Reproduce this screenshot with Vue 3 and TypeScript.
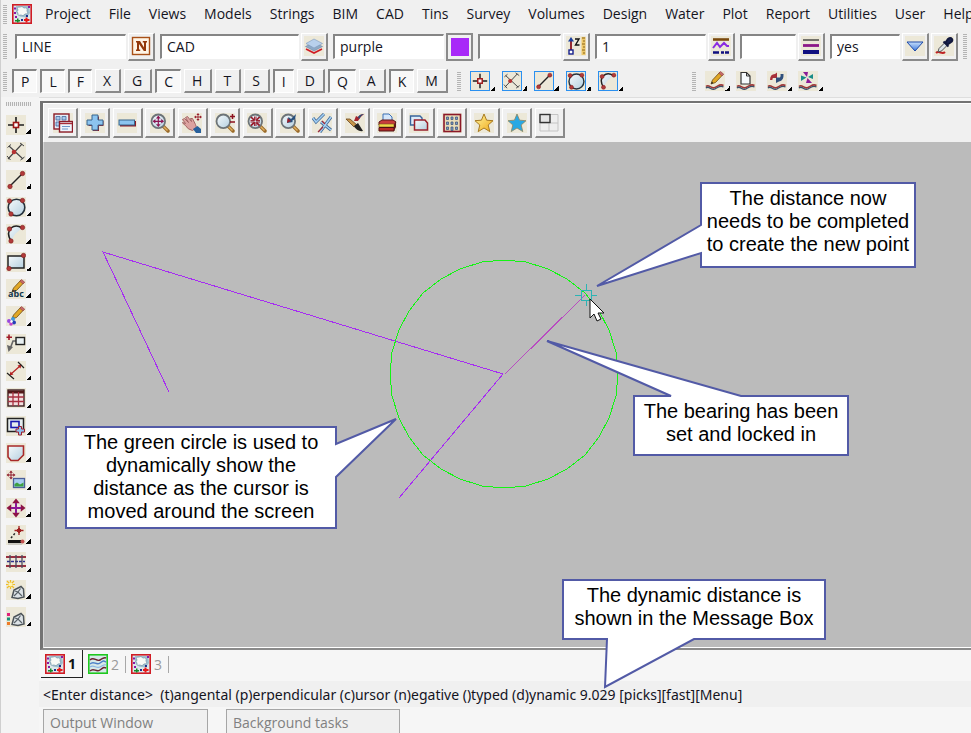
<script setup lang="ts">
interface Field {
  label: string
  value: string
  size: string
  icon: string
  action: string
}
interface Toggle {
  key: string
  on: boolean
}
interface Tool {
  icon: string
  label: string
  more: boolean
}
interface Callout {
  id: string
  lines: string[]
  outline: string
}
interface ViewTab {
  n: number
  icon: string
  active: boolean
}

const menus: string[] = [
  'Project', 'File', 'Views', 'Models', 'Strings', 'BIM', 'CAD', 'Tins', 'Survey',
  'Volumes', 'Design', 'Water', 'Plot', 'Report', 'Utilities', 'User', 'Help',
]

const fields: Field[] = [
  { label: 'Name', value: 'LINE', size: 'l', icon: 'name', action: 'Pick name' },
  { label: 'Model', value: 'CAD', size: 'xl', icon: 'layers', action: 'Pick model' },
  { label: 'Colour', value: 'purple', size: 'l', icon: 'swatch', action: 'Pick colour' },
  { label: 'Height', value: '', size: 'm', icon: 'height', action: 'Pick height' },
  { label: 'Line style', value: '1', size: 'l', icon: 'linestyle', action: 'Pick line style' },
  { label: 'Weight', value: '', size: 's', icon: 'weight', action: 'Pick weight' },
  { label: 'Tinable', value: 'yes', size: 'sm', icon: 'down', action: 'Choose tinable' },
]

const pressed = 'PLFCIQK'
const toggles: Toggle[] = 'PLFXGCHTSIDQAKM'.split('').map((key) => ({ key, on: pressed.includes(key) }))

const snapTools: Tool[] = [
  { icon: 'point', label: 'Point', more: true },
  { icon: 'cross', label: 'Intersection', more: true },
  { icon: 'line', label: 'Line', more: true },
  { icon: 'circle', label: 'Circle', more: true },
  { icon: 'arc', label: 'Arc', more: true },
]
const editTools: Tool[] = [
  { icon: 'edit', label: 'Edit string', more: true },
  { icon: 'page', label: 'New string', more: false },
  { icon: 'cycle', label: 'Change string', more: true },
  { icon: 'spin', label: 'Transform string', more: true },
]

const dockTools: Tool[] = [
  { icon: 'point', label: 'Create point', more: true },
  { icon: 'cross', label: 'Create intersection', more: true },
  { icon: 'line', label: 'Create line', more: true },
  { icon: 'circle', label: 'Create circle', more: true },
  { icon: 'arc', label: 'Create arc', more: true },
  { icon: 'rect', label: 'Create rectangle', more: true },
  { icon: 'text', label: 'Create text', more: true },
  { icon: 'symbol', label: 'Create symbol', more: true },
  { icon: 'leader', label: 'Create leader', more: true },
  { icon: 'dimension', label: 'Create dimension', more: true },
  { icon: 'table', label: 'Create table', more: true },
  { icon: 'frame', label: 'Create frame', more: true },
  { icon: 'polygon', label: 'Create polygon', more: true },
  { icon: 'image', label: 'Insert image', more: true },
  { icon: 'move', label: 'Move', more: true },
  { icon: 'measure', label: 'Measure', more: true },
  { icon: 'track', label: 'Parallel', more: true },
  { icon: 'newshape', label: 'New shape', more: true },
  { icon: 'shapes', label: 'Shape list', more: true },
]

const viewTools: Tool[] = [
  { icon: 'windows', label: 'View menu', more: false },
  { icon: 'plus', label: 'Add model', more: false },
  { icon: 'minus', label: 'Remove model', more: false },
  { icon: 'fit', label: 'Fit', more: false },
  { icon: 'pan', label: 'Pan', more: false },
  { icon: 'zoom', label: 'Zoom', more: false },
  { icon: 'shrink', label: 'Shrink', more: false },
  { icon: 'previous', label: 'Previous view', more: false },
  { icon: 'redraw', label: 'Toggle', more: false },
  { icon: 'brush', label: 'Redraw', more: false },
  { icon: 'print', label: 'Plot', more: false },
  { icon: 'copy', label: 'Copy view', more: false },
  { icon: 'building', label: 'Faces', more: false },
  { icon: 'star', label: 'Favourites', more: false },
  { icon: 'bluestar', label: 'Shared favourites', more: false },
  { icon: 'layout', label: 'Layout', more: false },
]

const callouts: Callout[] = [
  {
    id: 'distance',
    lines: ['The distance now', 'needs to be completed', 'to create the new point'],
    outline: 'M1 1H215V85H1V71L-103 104L1 43Z',
  },
  {
    id: 'bearing',
    lines: ['The bearing has been', 'set and locked in'],
    outline: 'M1 1H38L-86 -54L108 1H215V60H1Z',
  },
  {
    id: 'circle',
    lines: ['The green circle is used to', 'dynamically show the', 'distance as the cursor is', 'moved around the screen'],
    outline: 'M1 1H271V18L331 -7L271 51V102H1Z',
  },
  {
    id: 'message',
    lines: ['The dynamic distance is', 'shown in the Message Box'],
    outline: 'M1 1H263V60H132L43 108L45 60H1Z',
  },
]

const tabs: ViewTab[] = [
  { n: 1, icon: 'plan', active: true },
  { n: 2, icon: 'section', active: false },
  { n: 3, icon: 'plan', active: false },
]

// The view draws circles as chords, so the outline is a regular polygon.
const ring: string = Array.from({ length: 32 }, (_, i) => {
  const a = (i * Math.PI) / 16
  return `${Math.round(460 + 114 * Math.cos(a))},${Math.round(232 + 114 * Math.sin(a))}`
}).join(' ')

const sand = '<rect width="20" height="20" fill="#ece8d8"/>'
const dot = (x: number, y: number) =>
  `<circle cx="${x}" cy="${y}" r="2.2" fill="#b23a3a" stroke="#7c1c1c" stroke-width=".6"/>`
const arrows4 = (x: number, y: number, s: number, c: string) =>
  `<g transform="translate(${x} ${y}) scale(${s})" fill="${c}"><path d="M-1-6H1V6H-1ZM-6-1H6V1H-6Z"/><path d="M0-10L4-5H-4ZM0 10L4 5H-4ZM-10 0L-5-4V4ZM10 0L5-4V4Z"/></g>`
const lens =
  '<path d="M13 13L18 18" stroke="#9a6a2a" stroke-width="3.4" stroke-linecap="round"/><path d="M13 13L17.5 17.5" stroke="#e0b060" stroke-width="1.4"/><circle cx="8.3" cy="8.3" r="6.8" fill="url(#glass)" stroke="#6d7478" stroke-width="1.8"/>'
const pencil =
  '<path d="M6 13L7.500 9L15 1L18 3.500L10.500 11.500Z" fill="#e2a826" stroke="#6b4a10" stroke-width=".8"/><path d="M13.800 2.300L15.500 .5L18.800 3.200L17 5Z" fill="#c46a6a" stroke="#8a3a3a" stroke-width=".5"/><path d="M6 13L6.800 10.600L8.400 12.100Z" fill="#222"/>'
const wave =
  '<path d="M1 15.500C4 12.500 6 18.500 10 16.500S15 12.500 18.500 14.500" fill="none" stroke="#a03838" stroke-width="1.6"/><path d="M1 17C4 14 6 20 10 18S15 14 18.500 16" fill="none" stroke="#3a5068" stroke-width="1.3"/>'
const gem =
  '<path d="M6 17.500L8 10L15 6.500L17.500 9L18 17L12 18.500Z" fill="#dde3e7" stroke="#4c5358" stroke-width="1.5"/><path d="M8 16L12 12L16 16M12 12L14.500 8.500M12 12L9 11" fill="none" stroke="#596268" stroke-width="1.2"/>'
const starPath = 'M10 1L12.600 7.200L19 7.700L14.200 12L15.800 18.600L10 15L4.200 18.600L5.800 12L1 7.700L7.400 7.200Z'
const planIcon =
  '<rect x=".8" y=".8" width="18.400" height="18.400" fill="#dbe7ea" stroke="#d01c24" stroke-width="1.600"/><path d="M4 2H17L18 9Q15 14 11 13Q6 13 4 8Z" fill="#9fc0cf"/><path d="M6 6Q4 3 8 3Q10 1.500 12 4Q16 3 15 7Q17 10 13 10Q11 13 9 11Q5 12 6 9Q4 8 6 6Z" fill="#f8faf6" stroke="#7c9cb0" stroke-width=".8"/><path d="M2 3.500H4V5.500H2ZM2 8H4V10H2ZM3 12H5V14H3ZM16 2H18V4H16Z" fill="#8a1aa4"/><path d="M14 11H16V13H14ZM9 15H11V17H9Z" fill="#1c2f8c"/><path d="M3 16H5V14.500H6.500V16H8V17.500H6.500V18.500H5V17.500H3Z" fill="#148a2c"/><path d="M13.500 13.500H15.500V15H17.500V17H15.500V18.500H13.500V17H12V15H13.500Z" fill="#e81818"/>'

const icons: Record<string, string> = {
  plan: planIcon,
  section:
    '<rect x=".8" y=".8" width="18.400" height="18.400" fill="#d7e9e8" stroke="#1ec81e" stroke-width="1.600"/><path d="M2 6C6 2 8 8 12 6S16 3 18 4M2 17C6 13 8 19 12 16S16 13 18 14" fill="none" stroke="#6b2330" stroke-width="1.4"/><path d="M2 10C6 6 8 12 12 9S16 7 18 8" fill="none" stroke="#4c80c8" stroke-width="1.4"/><path d="M2 13C6 10 8 15 12 13S16 10 18 11" fill="none" stroke="#8cb8e4" stroke-width="1.2"/>',
  name: '<rect x="1.500" y="1.500" width="17" height="17" fill="#fff5e6" stroke="#a85018" stroke-width="1.400"/><path d="M5 5H9L13 11.500V6.500H11.800V5H16V6.500H15V15H12.800L8 8V13.500H9.200V15H5V13.500H6V6.500H5Z" fill="#93380a"/>',
  layers:
    sand + '<path d="M2 13L10 17L18 13" fill="none" stroke="#d01c24" stroke-width="1.800"/><path d="M1.500 10.500L10 6.500L18.500 10.500L10 15Z" fill="#8ea9c6" stroke="#6d88a8" stroke-width=".6"/><path d="M2 7.500L10 3L18.500 7.500L10 12Z" fill="#b8d0ec" stroke="#7c98bc" stroke-width=".6"/>',
  swatch: '<rect x="1" y="1" width="18" height="18" fill="#a828f8"/>',
  height:
    sand + '<path d="M5 4V14" stroke="#8c1420" stroke-width="1.800"/><path d="M5 1L8 5.500H2Z" fill="#1b3f9c"/><rect x="3" y="14" width="4" height="4" fill="#fff" stroke="#16208c" stroke-width="1.400"/><path d="M9 3H13L9.500 9H13.500" fill="none" stroke="#111" stroke-width="1.400"/><rect x="15.500" y="1" width="4" height="18" fill="#edc86a"/><path d="M16 2H19M17 5H19M16 8H19M17 11H19M16 14H19M17 17H19" stroke="#8a6418" stroke-width="1"/>',
  linestyle:
    sand + '<path d="M2 3.500H18" stroke="#7a4a10" stroke-width="2.600"/><path d="M2 12L6 7L9 11L13 7L16 10L18 10" fill="none" stroke="#8a2be2" stroke-width="2"/><path d="M2 16.500H18" stroke="#101080" stroke-width="2.600" stroke-dasharray="6 2 3 1"/>',
  weight:
    sand + '<path d="M2 4H18" stroke="#222" stroke-width="1.200"/><path d="M2 9.500H18" stroke="#8c1888" stroke-width="2.800"/><path d="M2 16H18" stroke="#101080" stroke-width="4"/>',
  down: sand + '<path d="M2 6H18L10 15Z" fill="url(#sky)" stroke="#1d49a8" stroke-width="1"/>',
  dropper:
    sand + '<path d="M2 17C5 14 8 19 11 16" fill="none" stroke="#c02424" stroke-width="2"/><path d="M4 16L5 12.500L11 6.500L13.500 9L7.500 15Z" fill="#dfe6ea" stroke="#555" stroke-width="1"/><path d="M9.500 5.500L14.500 10.500M11.500 6.500L14 3Q16.500 1 18 3Q19 5 16.500 6.500L13.500 8.500Z" fill="#1a2350" stroke="#12183c" stroke-width="2"/>',
  point:
    sand + '<path d="M10 2V7M10 13V18M2 10H7M13 10H18" stroke="#1c1c1c" stroke-width="1.600"/><rect x="7.500" y="7.500" width="5" height="5" fill="#fff" stroke="#a01818" stroke-width="1.600"/>',
  cross:
    sand + '<path d="M3 4L17 17M16 2L2 17" stroke="#444" stroke-width="1.100"/><path d="M1.500 5.500L5 2.500M14 1L18 4M1 14L4.500 18M14.500 18L18.500 15" stroke="#444" stroke-width="1"/><circle cx="8" cy="10" r="2.300" fill="#b43232"/>',
  line: sand + '<path d="M4 16L16 4" stroke="#222" stroke-width="1.500"/>' + dot(16.500, 3.500) + dot(4, 16.500),
  circle:
    sand + '<circle cx="10.500" cy="10.500" r="8.300" fill="url(#glass)" stroke="#26323c" stroke-width="1.600"/>' + dot(3.500, 4) + dot(16.500, 3.500) + dot(5, 17),
  arc:
    sand + '<path d="M5 17Q0 9 5 4Q10 0 16 4L9 10Z" fill="url(#glass)"/><path d="M5 17Q0 9 5 4Q10 0 16 4" fill="none" stroke="#222" stroke-width="1.600"/>' + dot(3.500, 5) + dot(16.500, 3.500) + dot(5, 17),
  rect: sand + '<rect x="2" y="4" width="16" height="12" fill="url(#glass)" stroke="#222" stroke-width="1.500"/>' + dot(17.500, 3.500) + dot(3, 16.500),
  text: sand + pencil + '<text x="10" y="18" text-anchor="middle" font-family="Open Sans, sans-serif" font-size="9" font-weight="700" fill="#12384c">abc</text>',
  symbol:
    sand + pencil + '<circle cx="3" cy="15" r="2" fill="#9a4ae0"/><circle cx="7" cy="13" r="2" fill="#3f9ae0"/><circle cx="8" cy="16.500" r="2" fill="#2440b8"/><circle cx="5" cy="18" r="1.800" fill="#c044c8"/><circle cx="5.500" cy="15.500" r="1.200" fill="#fff"/>',
  leader:
    sand + '<path d="M3 .5V6M.5 3.200H6" stroke="#a01828" stroke-width="1.600"/><path d="M10 7H7L4 15" fill="none" stroke="#666" stroke-width="1.600"/><path d="M1 11L7 13L2.500 18Z" fill="#666"/><rect x="10" y="3.500" width="8.500" height="7" fill="#e8f0f2" stroke="#222" stroke-width="1.400"/>',
  dimension:
    sand + '<path d="M5 13L14 5" stroke="#b42020" stroke-width="1.200"/><path d="M3.500 14.500L4.500 10.500L7.500 13.500ZM15.500 3.500L14.500 7.500L11.500 4.500Z" fill="#b42020"/><path d="M1 12L8 18M12 1L18 7" stroke="#222" stroke-width="1.200"/>',
  table:
    sand + '<rect x="2" y="2" width="16" height="16" fill="#f2dede" stroke="#3a2020" stroke-width="1.400"/><path d="M2 4H18" stroke="#521818" stroke-width="3"/><path d="M7 4V18M12.500 4V18M2 9H18M2 13.500H18" stroke="#a83040" stroke-width="1.300"/>',
  frame:
    sand + '<rect x="1.500" y="2.500" width="16" height="13" fill="#e4ecee" stroke="#222" stroke-width="1.500"/><rect x="5" y="5.500" width="8" height="6" fill="none" stroke="#1818b0" stroke-width="1.600"/><path d="M12.500 10.500H15.500V13H18.500V16H15.500V19H12.500V16H10V13H12.500Z" fill="#8ec0ec" stroke="#a02030" stroke-width="1"/>',
  polygon: sand + '<path d="M2 3H17.500V12L12 17.500H5L2 14Z" fill="url(#glass)" stroke="#a82828" stroke-width="1.600"/>',
  image:
    sand + arrows4(5, 5, 0.45, '#8c1828') + '<rect x="7.500" y="8.500" width="11" height="9" fill="#a8ccf0" stroke="#4c5e98" stroke-width="1.300"/><path d="M8.500 16.500V14L11 12.500L14 14.500L17.500 12.500V16.500Z" fill="#3da040"/>',
  move: sand + arrows4(10, 10, 0.95, '#8c1444') + '<path d="M10 5V15M5 10H15" stroke="#8c1898" stroke-width="2"/>',
  measure:
    sand + '<path d="M5 13L10 7" stroke="#222" stroke-width="1.500" stroke-dasharray="2 2"/><path d="M13 1V10M8.500 5.500H17.500" stroke="#a02020" stroke-width="1.300"/><path d="M13 3L15.500 5.500L13 8L10.500 5.500Z" fill="#a02020" stroke="#a02020"/><path d="M2 16.500H15" stroke="#111" stroke-width="3"/><circle cx="16.500" cy="16.500" r="2" fill="#c05050"/><path d="M2 19H16" stroke="#aaa" stroke-width="1"/>',
  track:
    sand + '<path d="M0 5H20M0 14H20" stroke="#983040" stroke-width="1.800"/><path d="M1 9.500H19" stroke="#303090" stroke-width="1.500" stroke-dasharray="3 1"/><path d="M4 3V16M10 3V16M16 3V16" stroke="#4c4c60" stroke-width="1.300"/>',
  newshape:
    sand + gem + '<path d="M4.500 0V9M0 4.500H9M1 1L8 8M8 1L1 8" stroke="#efbe28" stroke-width="1.200"/><circle cx="4.500" cy="4.500" r="2" fill="#fff3b0"/>',
  shapes: sand + gem + '<path d="M1 6H4V9H1Z" fill="#e0207c"/><path d="M1 10.500H4V13.500H1Z" fill="#189078"/><path d="M1 15H4V18H1Z" fill="#ee7a28"/>',
  edit: sand + wave + pencil,
  page: sand + '<path d="M5 1.500H10.500L14 5V13H5Z" fill="#f6fafc" stroke="#333" stroke-width="1.200"/><path d="M10.500 1.500V5H14" fill="none" stroke="#333"/>' + wave,
  cycle:
    sand + '<path d="M3 9Q3 3 8 3L10 1.500V7H6Q5 8 5.500 9Z" fill="#a83038"/><path d="M16.500 3Q17 10 12 10.500L9 12V6.500H13Q14 5 13.500 3Z" fill="#30507c"/>' + wave,
  spin:
    sand + '<path d="M9 6L5 1H10Z" fill="#8c1c98"/><path d="M10 6L15 3V8Z" fill="#188c88"/><path d="M9.500 7L14 12H8Z" fill="#8c1c98"/><path d="M8.500 6.500L3 10V4.500Z" fill="#188c88"/>' + wave,
  windows:
    sand + '<rect x="1" y="1" width="15" height="15" fill="#e4edf8" stroke="#8c1c28" stroke-width="1.400"/><path d="M3 3.500H7V7H3ZM9 3.500H13V7H9ZM3 9H7V13H3Z" fill="#a8c8ec" stroke="#44689c" stroke-width=".8"/><rect x="6.500" y="8.500" width="13" height="10.500" fill="#eef5fc" stroke="#8c1c28" stroke-width="1.400"/><path d="M7 10.500H19" stroke="#a82c38" stroke-width="1.400"/><path d="M9 13.500H17M9 16H15" stroke="#6f98cc" stroke-width="1.200"/>',
  plus: sand + '<path d="M8 3.500H14V8H18.500V13H14V18H8V13H3.500V8H8Z" fill="#8c1c28"/><path d="M7 2H13V7H18V12H13V17H7V12H2V7H7Z" fill="#8cc4f0" stroke="#38648c" stroke-width="1"/>',
  minus: sand + '<rect x="3" y="8" width="16" height="5.500" fill="#8c1c28"/><rect x="2" y="7" width="15.500" height="5" fill="#8cc4f0" stroke="#38648c"/>',
  fit: sand + lens + arrows4(8.3, 8.3, 0.58, '#8c1450'),
  pan:
    sand + '<path d="M1 4L3 3L7 7L4 2L6 1L10 6L9 3L11 3L14 9L15 12L11 15Q6 14 4 10Q1 8 1 7L4 8Z" fill="#dca2a0" stroke="#9c5c5c" stroke-width=".9" transform="translate(-.5 2.500)"/><path d="M11 16L15.500 13L19 16V20H14Z" fill="#28609c"/>' + arrows4(16, 4, 0.4, '#981c2c'),
  zoom: sand + lens + '<path d="M15 3.500H20M17.500 1V6M15 9H20" stroke="#8c1020" stroke-width="1.500"/>',
  shrink: sand + lens + '<path d="M4 4L7 7M12.600 4L9.600 7M4 12.600L7 9.600M12.600 12.600L9.600 9.600" stroke="#981828" stroke-width="1.700"/><path d="M7.600 3.500V7.600H3.500M9 3.500V7.600H13M7.600 13V9H3.500M9 13V9H13" fill="none" stroke="#981828" stroke-width="1"/>',
  previous: sand + lens + '<path d="M7 10L8.500 4L11 6Q13 4 16 1L15 6Q13 7 12 8L13 9Z" fill="#28507c"/><path d="M7 10L7.500 5L11 8Z" fill="#98202c"/>',
  redraw:
    sand + '<path d="M1 5L4 9L12 1M9 9L19 17M8 19L19 4" fill="none" stroke="#3c6494" stroke-width="3"/><path d="M1 5L4 9L12 1M9 9L19 17M8 19L19 4" fill="none" stroke="#a4d0f4" stroke-width="1.600"/><path d="M6 19L11 14M10 8L13 11" stroke="#a02838" stroke-width="1.200"/>',
  brush:
    sand + '<path d="M1 6L5 6L12 12L9 14Z" fill="#c8964c" stroke="#6a4820" stroke-width=".8"/><path d="M9 13L13 10L18 18Q12 19 9 13Z" fill="#222"/><path d="M9 8L11 3L13 4Q15 1 19 1Q15 4 13 8Z" fill="#a4242e"/><path d="M13 4Q15 1 19 1Q16 2 14 6Z" fill="#28507c"/>',
  print:
    sand + '<path d="M6 8V1H12L15 4V8Z" fill="#d4e6fa" stroke="#3c70b8" stroke-width="1"/><path d="M2 9L5 7H16L19 9L17 12H2Z" fill="#c83c3c" stroke="#5c1818"/><path d="M2 11H17V14H2Z" fill="#f0d848" stroke="#74501c" stroke-width=".6"/><path d="M2 14.500H17V18H2Z" fill="#b82828" stroke="#4c1010"/><path d="M17 12L19 9V14L17 18Z" fill="#5c1818"/>',
  copy:
    sand + '<path d="M1.500 3H11L13 5V12H1.500Z" fill="#dcebfa" stroke="#38649c" stroke-width="1.400"/><path d="M5.500 7H16L18.500 10V17H5.500Z" fill="url(#glass)" stroke="#98202c" stroke-width="1.500"/>',
  building:
    sand + '<rect x="2" y="1.500" width="16.500" height="17" fill="#e8dcb8" stroke="#8c1828" stroke-width="1.600"/><path d="M4.500 4H6.500V6.500H4.500ZM9 4H11V6.500H9ZM13.500 4H15.500V6.500H13.500ZM4.500 9H6.500V11.500H4.500ZM9 9H11V11.500H9ZM13.500 9H15.500V11.500H13.500ZM4.500 14H6.500V16.500H4.500ZM9 14H11V17.500H9ZM13.500 14H15.500V16.500H13.500Z" fill="#7c9cc4" stroke="#44587c" stroke-width=".8"/>',
  star: sand + `<path d="${starPath}" fill="url(#gold)" stroke="#a87a20" stroke-width="1"/>`,
  bluestar: sand + `<path d="${starPath}" fill="#28a8e4" stroke="#8c8460" stroke-width=".8"/>`,
  layout: '<path d="M1 1.500H19V18H1ZM10 1.500V18M1 10H19" fill="#eee" stroke="#c4c4c4" stroke-width="1"/><rect x="1" y="1.500" width="10" height="8" fill="#e4e4e4" stroke="#333" stroke-width="1.400"/>',
}
</script>

<template>
  <div class="app">
    <svg class="defs" aria-hidden="true">
      <defs>
        <linearGradient id="glass" x1="0" y1="0" x2="1" y2="1">
          <stop offset="0" stop-color="#f6fafc" />
          <stop offset="1" stop-color="#b4cfdf" />
        </linearGradient>
        <linearGradient id="sky" x1="0" y1="0" x2="0" y2="1">
          <stop offset="0" stop-color="#c8e0fc" />
          <stop offset="1" stop-color="#3c78dc" />
        </linearGradient>
        <linearGradient id="gold" x1="0" y1="0" x2="1" y2="1">
          <stop offset="0" stop-color="#fff6a0" />
          <stop offset="1" stop-color="#f0a818" />
        </linearGradient>
      </defs>
    </svg>

    <nav class="menubar" aria-label="Main menu">
      <span class="grip"></span>
      <svg class="icon logo" viewBox="0 0 20 20" v-html="icons.plan"></svg>
      <div class="menus">
        <button v-for="m in menus" :key="m" type="button" class="menu">{{ m }}</button>
      </div>
    </nav>

    <div class="fieldbar">
      <span class="grip tall"></span>
      <div v-for="f in fields" :key="f.label" class="field">
        <input type="text" :class="['box', f.size]" :aria-label="f.label" :value="f.value" />
        <button type="button" :class="['raised', 'pick', { deep: f.icon === 'swatch' }]" :aria-label="f.action">
          <svg class="icon" viewBox="0 0 20 20" v-html="icons[f.icon]"></svg>
        </button>
      </div>
      <button type="button" class="raised pick last" aria-label="Match attributes">
        <svg class="icon" viewBox="0 0 20 20" v-html="icons.dropper"></svg>
      </button>
      <span class="grip tall"></span>
    </div>

    <div class="snapbar">
      <span class="grip"></span>
      <div class="toggles">
        <button
          v-for="t in toggles"
          :key="t.key"
          type="button"
          :class="['toggle', t.on ? 'sunken' : 'raised']"
          :aria-pressed="t.on"
        >{{ t.key }}</button>
      </div>
      <span class="grip"></span>
      <div class="tools snaps">
        <button v-for="t in snapTools" :key="t.label" type="button" class="tool framed" :aria-label="t.label">
          <svg class="icon" viewBox="0 0 20 20" v-html="icons[t.icon]"></svg>
          <span class="more"></span>
        </button>
      </div>
      <span class="grip"></span>
      <div class="tools">
        <button v-for="t in editTools" :key="t.label" type="button" class="tool" :aria-label="t.label">
          <svg class="icon" viewBox="0 0 20 20" v-html="icons[t.icon]"></svg>
          <span v-if="t.more" class="more"></span>
        </button>
      </div>
    </div>

    <div class="body">
      <aside class="dock" aria-label="CAD tools">
        <span class="grip flat"></span>
        <button v-for="t in dockTools" :key="t.label" type="button" class="tool docked" :aria-label="t.label">
          <svg class="icon" viewBox="0 0 20 20" v-html="icons[t.icon]"></svg>
          <span v-if="t.more" class="more"></span>
        </button>
      </aside>

      <main class="work">
        <section class="view">
          <div class="viewbar">
            <div class="viewtools">
              <button v-for="t in viewTools" :key="t.label" type="button" class="raised viewtool" :aria-label="t.label">
                <svg class="icon" viewBox="0 0 20 20" v-html="icons[t.icon]"></svg>
              </button>
            </div>
          </div>
          <div class="canvas">
            <svg class="drawing" aria-label="Drawing">
              <g fill="none" shape-rendering="crispEdges">
                <polyline points="125,250 59,110 459,232 355,356" stroke="#a62cf2" />
                <polygon :points="ring" stroke="#14f514" />
                <path d="M461 232L541 153" stroke="#b84cc0" />
                <path d="M537 148H547V158H537ZM531 153H537M547 153H553M542 142V148M542 158V164" stroke="#2cb4b4" />
              </g>
              <path d="M546 157V176L550 172L553 179L557 177L554 171H560Z" fill="#fff" stroke="#111" />
            </svg>
            <div v-for="c in callouts" :key="c.id" :class="['callout', 'at-' + c.id]">
              <svg class="outline" aria-hidden="true"><path :d="c.outline" /></svg>
              <p><span v-for="l in c.lines" :key="l">{{ l }}</span></p>
            </div>
          </div>
        </section>

        <div class="tabs" role="tablist">
          <button
            v-for="t in tabs"
            :key="t.n"
            type="button"
            role="tab"
            :aria-selected="t.active"
            :class="['tab', { active: t.active }]"
          >
            <svg class="icon" viewBox="0 0 20 20" v-html="icons[t.icon]"></svg>
            <span>{{ t.n }}</span>
          </button>
        </div>

        <div class="message" role="status">&lt;Enter distance&gt;&nbsp; (t)angental (p)erpendicular (c)ursor (n)egative ()typed (d)ynamic 9.029 [picks][fast][Menu]</div>

        <div class="panels">
          <button type="button" class="panel output">Output Window</button>
          <button type="button" class="panel">Background tasks</button>
        </div>
      </main>
    </div>
  </div>
</template>

<style>
body {
  margin: 0;
  overflow: hidden;
}
</style>

<style scoped>
.app {
  display: flex;
  flex-direction: column;
  box-sizing: border-box;
  height: 100vh;
  overflow: hidden;
  border-left: 1px solid #cfcfcf;
  background: #f0f0f0;
  color: #14141e;
  font-family: "Open Sans", "Noto Sans", sans-serif;
  font-size: 14px;
}
.app *,
.app *::before,
.app *::after {
  box-sizing: border-box;
}
.defs {
  position: absolute;
  width: 0;
  height: 0;
}
button,
input {
  margin: 0;
  padding: 0;
  border: 0;
  border-radius: 0;
  background: none;
  color: inherit;
  font: inherit;
}
.icon {
  display: block;
  flex: none;
  width: 20px;
  height: 20px;
}
.grip {
  flex: none;
  width: 4px;
  height: 19px;
  background: repeating-linear-gradient(#b4b4b4 0 1px, #f0f0f0 1px 2px);
}
.grip.tall {
  height: 25px;
}
.grip.flat {
  width: 25px;
  height: 4px;
  margin: 5px 0;
  background: repeating-linear-gradient(90deg, #b4b4b4 0 1px, #f0f0f0 1px 2px);
}

.menubar {
  display: flex;
  flex: none;
  align-items: center;
  height: 28px;
  padding-left: 2px;
}
.logo {
  margin: 0 13px 0 5px;
}
.menus {
  display: flex;
  flex: 1;
  min-width: 0;
  gap: 18px;
  overflow: hidden;
}
.menu {
  flex: none;
  line-height: 20px;
}

.fieldbar {
  display: flex;
  flex: none;
  align-items: center;
  gap: 5px;
  height: 37px;
  padding-left: 2px;
  overflow: hidden;
}
.fieldbar > .grip:first-child {
  margin-right: 3px;
}
.field {
  display: flex;
  flex: none;
  align-items: center;
  gap: 2px;
}
.box {
  height: 25px;
  padding: 0 5px 2px;
  border: solid;
  border-width: 2px 1px 1px 2px;
  border-color: #858585 #fff #fff #858585;
  background: #fff;
}
.box.xl { width: 139px; }
.box.l { width: 111px; }
.box.m { width: 83px; }
.box.sm { width: 70px; }
.box.s { width: 56px; }
.raised {
  border: solid;
  border-width: 1px 2px 2px 1px;
  border-color: #fff #8a8a8a #8a8a8a #fff;
  background: #f0f0f0;
}
.sunken {
  border: solid;
  border-width: 2px 1px 1px 2px;
  border-color: #858585 #fff #fff #858585;
  background: #f8f8f8;
}
.pick {
  display: grid;
  flex: none;
  place-items: center;
  width: 27px;
  height: 28px;
}
.pick.deep {
  border: 2px solid #8a8a8a;
}
.pick.last {
  margin-left: -3px;
}

.snapbar {
  display: flex;
  flex: none;
  align-items: center;
  height: 32px;
  padding-left: 2px;
}
.toggles {
  display: flex;
  gap: 3px;
  margin: 0 9px 0 5px;
}
.toggle {
  height: 24px;
  padding: 0 7px;
  line-height: 19px;
}
.toggle.raised {
  padding-right: 8px;
}
.tools {
  display: flex;
  margin-left: 9px;
}
.tool {
  display: flex;
  flex: none;
  align-items: flex-end;
  width: 31px;
}
.snaps {
  gap: 1px;
  margin-right: 63px;
}
.framed .icon {
  border: 1px solid #2a90f0;
}
.more {
  width: 5px;
  height: 5px;
  background: linear-gradient(135deg, transparent 50%, #000 50%);
}

.body {
  display: flex;
  flex: 1;
  min-height: 0;
}
.dock {
  display: flex;
  flex: none;
  flex-direction: column;
  width: 38px;
  padding-left: 5px;
  background: #f4f4f4;
}
.docked {
  height: 27px;
  align-items: center;
}
.docked:nth-child(3n) {
  height: 28px;
}
.docked .more {
  margin-top: 14px;
}
.work {
  display: flex;
  flex: 1;
  flex-direction: column;
  min-width: 0;
  border-top: 1px solid #dedede;
  background: #f6f6f6;
}
.view {
  display: flex;
  flex: 1;
  flex-direction: column;
  margin: 3px 0 0 1px;
  border: solid;
  border-width: 2px 0 2px 3px;
  border-color: #737373 #737373 #8a8a8a #737373;
}
.viewbar {
  flex: none;
  padding: 4px 0 4px 4px;
  border-left: 1px solid #fff;
  border-top: 1px solid #fff;
  background: #f0f0f0;
}
.viewtools {
  display: flex;
  justify-content: space-between;
  max-width: 517px;
}
.viewtool {
  display: grid;
  flex: none;
  place-items: center;
  width: 30px;
  height: 30px;
}
.canvas {
  position: relative;
  flex: 1;
  border-bottom: 1px solid #fff;
  border-left: 1px solid #d8d8d8;
  background: #bbb;
}
.drawing {
  position: absolute;
  inset: 0;
  width: 100%;
  height: 100%;
}
.callout {
  position: absolute;
  z-index: 1;
  padding-top: 5px;
  color: #000;
  font: 20px/23px "Liberation Sans", Arial, sans-serif;
  text-align: center;
  white-space: nowrap;
}
.callout p {
  position: relative;
  margin: 0;
}
.callout span {
  display: block;
}
.outline {
  position: absolute;
  top: 0;
  left: 0;
  width: 100%;
  height: 100%;
  overflow: visible;
}
.outline path {
  fill: #fff;
  stroke: #525aa6;
  stroke-width: 2;
}
.at-distance { top: 40px; left: 656px; width: 216px; height: 86px; }
.at-bearing { top: 253px; left: 589px; width: 216px; height: 61px; }
.at-circle { top: 284px; left: 21px; width: 272px; height: 103px; }
.at-message { top: 437px; left: 518px; width: 264px; height: 61px; }

.tabs {
  display: flex;
  flex: none;
  height: 31px;
  padding-left: 2px;
  color: #9a9a9a;
}
.tab {
  display: flex;
  align-items: center;
  gap: 3px;
  height: 28px;
  padding: 0 7px 0 5px;
  position: relative;
}
.tab:not(.active)::after {
  content: "";
  position: absolute;
  top: 6px;
  right: 0;
  width: 1px;
  height: 17px;
  background: #a8a8a8;
}
.tab.active {
  padding: 0 6px 0 4px;
  border: solid #222;
  border-width: 0 1px 1px 0;
  color: #111;
  font-weight: 700;
}
.message {
  flex: none;
  height: 26px;
  padding: 1px 0 0 4px;
  background: #f0f0f0;
  font-family: "Noto Sans", "Open Sans", sans-serif;
  line-height: 26px;
  white-space: nowrap;
  overflow: hidden;
}
.panels {
  display: flex;
  flex: none;
  gap: 18px;
  height: 26px;
  padding: 2px 0 0 4px;
}
.panel {
  width: 174px;
  padding: 2px 0 0 6px;
  border: solid #a6a6a6;
  border-width: 1px 1px 0;
  background: #f0f0f0;
  color: #808080;
  text-align: left;
}
.panel.output {
  width: 165px;
}
</style>
